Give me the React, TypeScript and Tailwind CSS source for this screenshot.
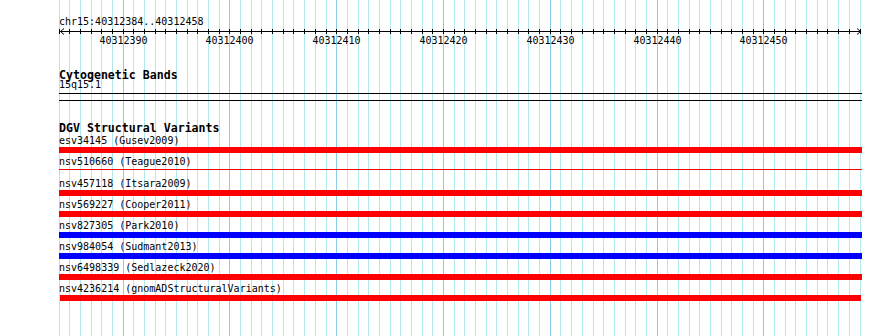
const START = 40312384;
const PX_PER_BP = 10.68;
const X0 = 59;

const gridX = (i: number) => Math.floor(X0 + i * PX_PER_BP) + 0.5;

const majors = [40312390, 40312400, 40312410, 40312420, 40312430, 40312440, 40312450];

type Variant = { id: string; study: string; color: 'red' | 'blue'; thin?: boolean; inset?: boolean };

const variants: Variant[] = [
  { id: 'esv34145', study: 'Gusev2009', color: 'red' },
  { id: 'nsv510660', study: 'Teague2010', color: 'red', thin: true },
  { id: 'nsv457118', study: 'Itsara2009', color: 'red' },
  { id: 'nsv569227', study: 'Cooper2011', color: 'red' },
  { id: 'nsv827305', study: 'Park2010', color: 'blue' },
  { id: 'nsv984054', study: 'Sudmant2013', color: 'blue' },
  { id: 'nsv6498339', study: 'Sedlazeck2020', color: 'red' },
  { id: 'nsv4236214', study: 'gnomADStructuralVariants', color: 'red', inset: true },
];

function Grid() {
  return (
    <svg className="absolute inset-0" width={890} height={336}>
      {Array.from({ length: 76 }, (_, i) => {
        const major = (START + i) % 10 === 0;
        return (
          <line
            key={i}
            x1={gridX(i)}
            x2={gridX(i)}
            y1={0}
            y2={336}
            stroke={major ? '#87ceeb' : '#b0e8ef'}
            strokeWidth={1}
          />
        );
      })}
    </svg>
  );
}

function Axis() {
  return (
    <svg className="block mt-[1px] -ml-[59px]" width={890} height={7}>
      <line x1={59} x2={861} y1={3.5} y2={3.5} stroke="#000" />
      <polyline points="64,0.5 60.5,3.5 64,6.5" fill="none" stroke="#000" />
      <polyline points="857,0.5 860.5,3.5 857,6.5" fill="none" stroke="#000" />
      {Array.from({ length: 76 }, (_, i) => (
        <line key={i} x1={gridX(i)} x2={gridX(i)} y1={1} y2={6} stroke="#000" />
      ))}
    </svg>
  );
}

function TickLabels() {
  return (
    <div className="relative h-[10px] mt-[1px] -ml-[59px] leading-[10px] text-[10px]">
      {majors.map((m) => (
        <span
          key={m}
          className="absolute top-0 -translate-x-1/2"
          style={{ left: gridX(m - START) }}
        >
          {m}
        </span>
      ))}
    </div>
  );
}

export default function App() {
  return (
    <div className="relative w-[890px] h-[336px] overflow-hidden bg-white text-black font-['DejaVu_Sans_Mono',monospace]">
      <Grid />
      <div className="relative pl-[59px]">
        <div className="mt-[17px] text-[10px] leading-[10px]">chr15:40312384..40312458</div>
        <Axis />
        <TickLabels />

        <div className="mt-[24px] text-[11.6px] leading-[10px] font-bold">Cytogenetic Bands</div>
        <div className="text-[10px] leading-[10px]">15q15.1</div>
        <div className="mt-[3px] w-[803px] h-[8px] border-y border-black" />

        <div className="mt-[22px] text-[11.6px] leading-[10px] font-bold">DGV Structural Variants</div>
        <div className="mt-[3px] flex flex-col gap-[4px]">
          {variants.map((v) => (
            <div key={v.id}>
              <div className="text-[10px] leading-[10px] whitespace-pre">
                {v.id} ({v.study})
              </div>
              <div className="mt-[1px] h-[6px] w-[803px]">
                {v.thin ? (
                  <div className="mt-[2px] h-[1px] bg-[#ff0000]" />
                ) : (
                  <div
                    className={
                      (v.color === 'blue' ? 'bg-[#0000ff] ' : 'bg-[#ff0000] ') +
                      (v.inset ? 'ml-[1px] mr-[1px] h-[6px]' : 'h-[6px]')
                    }
                  />
                )}
              </div>
            </div>
          ))}
        </div>
      </div>
    </div>
  );
}
